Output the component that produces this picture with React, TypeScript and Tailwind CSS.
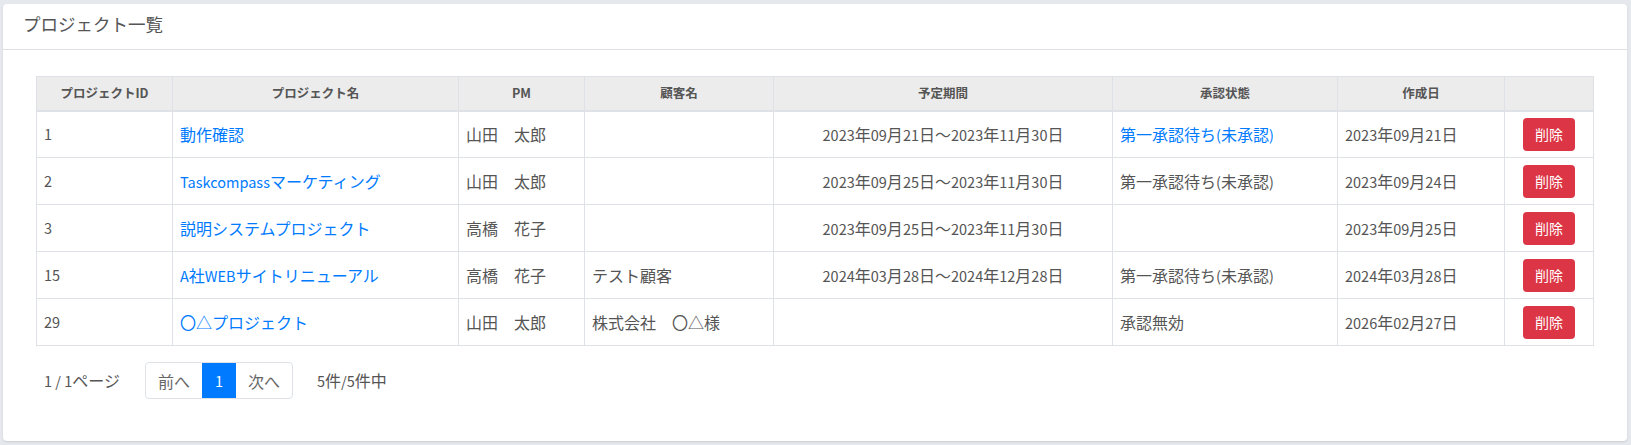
import React from 'react'

type Project = {
  id:       number
  name:     string
  pm:       string
  customer: string
  period:   string
  status:   string
  statusLink: boolean
  created:  string
}

const projects: Project[] = [
  { id: 1,  name: '動作確認',                 pm: '山田　太郎', customer: '',              period: '2023年09月21日〜2023年11月30日', status: '第一承認待ち(未承認)', statusLink: true,  created: '2023年09月21日' },
  { id: 2,  name: 'Taskcompassマーケティング', pm: '山田　太郎', customer: '',              period: '2023年09月25日〜2023年11月30日', status: '第一承認待ち(未承認)', statusLink: false, created: '2023年09月24日' },
  { id: 3,  name: '説明システムプロジェクト',   pm: '高橋　花子', customer: '',              period: '2023年09月25日〜2023年11月30日', status: '',                     statusLink: false, created: '2023年09月25日' },
  { id: 15, name: 'A社WEBサイトリニューアル',   pm: '高橋　花子', customer: 'テスト顧客',     period: '2024年03月28日〜2024年12月28日', status: '第一承認待ち(未承認)', statusLink: false, created: '2024年03月28日' },
  { id: 29, name: '〇△プロジェクト',           pm: '山田　太郎', customer: '株式会社　〇△様', period: '',                               status: '承認無効',             statusLink: false, created: '2026年02月27日' },
]

const headers = ['プロジェクトID', 'プロジェクト名', 'PM', '顧客名', '予定期間', '承認状態', '作成日', '']

// latin runs render a bit smaller than the CJK runs (like a Source Sans + CJK fallback stack)
const CJK = /([\u3000-\u30ff\u4e00-\u9fff\uff00-\uffef\u25a0-\u25ff]+)/

function Mixed({ text }: { text: string }) {
  return (
    <>
      {text.split(CJK).filter(Boolean).map((part, i) =>
        CJK.test(part)
          ? <span key={i} className="text-[16px]">{part}</span>
          : <span key={i} className="text-[14.5px]">{part}</span>
      )}
    </>
  )
}

const cell = 'border border-[#dee2e6] px-[7px] align-middle whitespace-nowrap'

export default function App() {
  return (
    <div
      className="min-h-screen bg-[#e5e9ed] pl-[3px] pr-[4px] pt-[4px] pb-[4px] text-[#555]"
      style={{ fontFamily: '"Noto Sans CJK JP", "Noto Sans", sans-serif' }}
    >
      <div className="h-[437px] bg-white rounded-[4px] shadow-[0_1px_2px_rgba(0,0,0,0.12)] flex flex-col">
        {/* Header */}
        <div className="h-[46px] border-b border-[#dee2e6] px-[20px] pb-[5px] flex items-center">
          <h1 className="text-[17.5px] text-[#555] leading-none">プロジェクト一覧</h1>
        </div>

        <div className="px-[33px] pt-[26px]">
          <table className="w-full table-fixed border-collapse text-[15px] leading-[24px]">
            <colgroup>
              <col className="w-[136px]" />
              <col className="w-[286px]" />
              <col className="w-[126px]" />
              <col className="w-[189px]" />
              <col className="w-[339px]" />
              <col className="w-[225px]" />
              <col className="w-[167px]" />
              <col />
            </colgroup>
            <thead>
              <tr className="bg-[#ececec]">
                {headers.map((h, i) => (
                  <th
                    key={i}
                    className="h-[34px] border border-[#dee2e6] border-b-2 text-center text-[12.5px] font-bold text-[#555] px-2"
                  >
                    {h}
                  </th>
                ))}
              </tr>
            </thead>
            <tbody>
              {projects.map((p) => (
                <tr key={p.id}>
                  <td className={`h-[47px] ${cell}`}><Mixed text={String(p.id)} /></td>
                  <td className={`${cell} text-[#007bff]`}><Mixed text={p.name} /></td>
                  <td className={cell}><Mixed text={p.pm} /></td>
                  <td className={cell}><Mixed text={p.customer} /></td>
                  <td className={`${cell} text-center`}><Mixed text={p.period} /></td>
                  <td className={`${cell} ${p.statusLink ? 'text-[#007bff]' : ''}`}><Mixed text={p.status} /></td>
                  <td className={cell}><Mixed text={p.created} /></td>
                  <td className={`${cell} text-center`}>
                    <button className="inline-flex items-center justify-center w-[52px] h-[33px] rounded-[4px] bg-[#dc3545] text-white text-[14px]">
                      削除
                    </button>
                  </td>
                </tr>
              ))}
            </tbody>
          </table>

          {/* Pagination */}
          <div className="flex items-center mt-[16px] leading-[24px]">
            <span className="ml-[8px] text-[#555]"><Mixed text="1 / 1ページ" /></span>
            <div className="ml-[25px] flex h-[37px] border border-[#dee2e6] rounded-[4px] overflow-hidden">
              <span className="w-[56px] flex items-center justify-center text-[#666]"><Mixed text="前へ" /></span>
              <span className="w-[34px] flex items-center justify-center bg-[#007bff] text-white"><Mixed text="1" /></span>
              <span className="w-[56px] flex items-center justify-center text-[#666]"><Mixed text="次へ" /></span>
            </div>
            <span className="ml-[24px] text-[#555]"><Mixed text="5件/5件中" /></span>
          </div>
        </div>
      </div>
    </div>
  )
}
